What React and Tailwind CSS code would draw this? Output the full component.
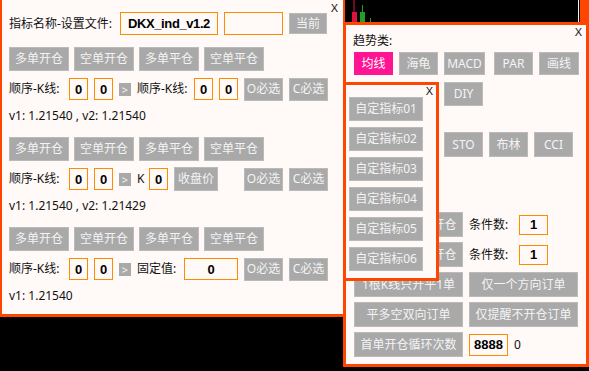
import React from 'react';

const cjk = "font-['Noto_Sans','Noto_Sans_CJK_SC',sans-serif]";

function Btn({ children, className = '' }) {
  return (
    <div className={`flex items-center justify-center shrink-0 bg-[#a9a9a9] border border-[#bababa] text-[#f4f4f4] text-[12px] leading-none whitespace-nowrap ${className}`}>
      {children}
    </div>
  );
}

function Box({ children, className = '' }) {
  return (
    <div className={`flex items-center justify-center shrink-0 border border-[#ff8c00] text-black font-bold font-['Liberation_Sans',sans-serif] text-[13px] leading-none ${className}`}>
      {children}
    </div>
  );
}

function Arrow() {
  return (
    <div className="flex items-center justify-center shrink-0 w-[12px] h-[13px] bg-[#a9a9a9] text-[#f4f4f4] text-[11px] leading-none">&gt;</div>
  );
}

function Close({ className = '' }) {
  return (
    <span className={`absolute text-[11px] leading-none text-[#111] font-['Liberation_Sans',sans-serif] ${className}`}>X</span>
  );
}

function OrderButtons() {
  return (
    <div className="flex gap-[5px]">
      <Btn className="w-[60px] h-[24px]">多单开仓</Btn>
      <Btn className="w-[60px] h-[24px]">空单开仓</Btn>
      <Btn className="w-[60px] h-[24px]">多单平仓</Btn>
      <Btn className="w-[60px] h-[24px]">空单平仓</Btn>
    </div>
  );
}

function SeqLabel() {
  return <span className="w-[54px] shrink-0 whitespace-nowrap">顺序-K线:</span>;
}

export default function App() {
  const customs = ['自定指标01', '自定指标02', '自定指标03', '自定指标04', '自定指标05', '自定指标06'];

  return (
    <div className={`relative w-[589px] h-[371px] bg-black overflow-hidden text-[12px] text-[#111] ${cjk}`}>
      {/* chart strip behind */}
      <svg className="absolute left-[345px] top-0" width="233" height="22">
        <line x1="9" y1="0" x2="9" y2="12" stroke="#dc143c" strokeWidth="1" />
        <rect x="7" y="12" width="5" height="10" fill="#dc143c" />
        <line x1="17.5" y1="5" x2="17.5" y2="12" stroke="#22a022" strokeWidth="1" />
        <rect x="15" y="12" width="5" height="10" fill="#22a022" />
        <line x1="25.5" y1="18" x2="25.5" y2="22" stroke="#22a022" strokeWidth="1" />
      </svg>
      <div className="absolute left-[578px] top-0 w-px h-[22px] bg-[#f0f0f0]" />
      <div className="absolute left-[580px] top-0 w-[9px] h-[22px] bg-[#ff4500]" />

      {/* left settings window */}
      <div className="absolute left-0 top-0 w-[345px] h-[317px] bg-[#fffaf8] border-l-2 border-r-2 border-b-[3px] border-[#ff4500] pl-[7px] pt-[12px]">
        <Close className="right-[5px] top-[3px]" />

        <div className="flex items-center gap-[6px] h-[23px]">
          <span className="w-[105px] shrink-0 whitespace-nowrap">指标名称-设置文件:</span>
          <Box className="w-[98px] h-[23px] text-[12px] tracking-[-0.4px]">DKX_ind_v1.2</Box>
          <Box className="w-[59px] h-[23px]" />
          <Btn className="w-[38px] h-[21px]">当前</Btn>
        </div>

        <div className="mt-[12px]"><OrderButtons /></div>
        <div className="mt-[6px] flex items-center gap-[6px] h-[24px]">
          <SeqLabel />
          <Box className="w-[19px] h-[22px]">0</Box>
          <Box className="w-[19px] h-[22px]">0</Box>
          <Arrow />
          <span className="w-[51px] shrink-0 whitespace-nowrap">顺序-K线:</span>
          <Box className="w-[19px] h-[22px]">0</Box>
          <Box className="w-[19px] h-[22px]">0</Box>
          <Btn className="w-[39px] h-[23px]">O必选</Btn>
          <Btn className="w-[39px] h-[23px]">C必选</Btn>
        </div>
        <div className="h-[30px] flex items-center">v1: 1.21540 , v2: 1.21540</div>

        <div className="mt-[6px]"><OrderButtons /></div>
        <div className="mt-[6px] flex items-center gap-[6px] h-[24px]">
          <SeqLabel />
          <Box className="w-[19px] h-[22px]">0</Box>
          <Box className="w-[19px] h-[22px]">0</Box>
          <Arrow />
          <span className="w-[6px] shrink-0">K</span>
          <Box className="w-[19px] h-[22px]">0</Box>
          <Btn className="w-[44px] h-[24px]">收盘价</Btn>
          <Btn className="ml-[20px] w-[39px] h-[23px]">O必选</Btn>
          <Btn className="w-[39px] h-[23px]">C必选</Btn>
        </div>
        <div className="h-[30px] flex items-center">v1: 1.21540 , v2: 1.21429</div>

        <div className="mt-[6px]"><OrderButtons /></div>
        <div className="mt-[6px] flex items-center gap-[6px] h-[24px]">
          <SeqLabel />
          <Box className="w-[19px] h-[22px]">0</Box>
          <Box className="w-[19px] h-[22px]">0</Box>
          <Arrow />
          <span className="w-[41px] shrink-0 whitespace-nowrap">固定值:</span>
          <Box className="w-[54px] h-[22px]">0</Box>
          <Btn className="w-[39px] h-[23px]">O必选</Btn>
          <Btn className="w-[39px] h-[23px]">C必选</Btn>
        </div>
        <div className="h-[30px] flex items-center">v1: 1.21540</div>
      </div>

      {/* right trend window */}
      <div className="absolute left-[343px] top-[22px] w-[246px] h-[345px] bg-[#fffaf8] border-[3px] border-[#ff4500] pl-[8px] pt-[6px]">
        <Close className="right-[4px] top-[2px]" />
        <div className="h-[20px] flex items-center -ml-px">趋势类:</div>

        <div className="mt-[1px] flex">
          <Btn className="w-[39px] h-[23px] !bg-[#ff1493] !border-[#ff1493] text-white">均线</Btn>
          <Btn className="ml-[6px] w-[39px] h-[23px]">海龟</Btn>
          <Btn className="ml-[6px] w-[41px] h-[23px]">MACD</Btn>
          <Btn className="ml-[9px] w-[39px] h-[23px]">PAR</Btn>
          <Btn className="ml-[6px] w-[40px] h-[23px]">画线</Btn>
        </div>
        <div className="mt-[7px] flex">
          <Btn className="ml-[90px] w-[39px] h-[24px]">DIY</Btn>
        </div>
        <div className="mt-[26px] flex">
          <Btn className="ml-[90px] w-[39px] h-[25px]">STO</Btn>
          <Btn className="ml-[6px] w-[39px] h-[25px]">布林</Btn>
          <Btn className="ml-[6px] w-[39px] h-[25px]">CCI</Btn>
        </div>

        <div className="mt-[55px] flex items-center">
          <Btn className="w-[109px] h-[25px]">多单条件满足开仓</Btn>
          <span className="ml-[6px] w-[44px] shrink-0 whitespace-nowrap">条件数:</span>
          <Box className="ml-[6px] w-[29px] h-[20px]">1</Box>
        </div>
        <div className="mt-[5px] flex items-center">
          <Btn className="w-[109px] h-[25px]">空单条件满足开仓</Btn>
          <span className="ml-[6px] w-[44px] shrink-0 whitespace-nowrap">条件数:</span>
          <Box className="ml-[6px] w-[29px] h-[20px]">1</Box>
        </div>
        <div className="mt-[5px] flex">
          <Btn className="w-[109px] h-[25px]">1根K线只开平1单</Btn>
          <Btn className="ml-[6px] w-[109px] h-[25px]">仅一个方向订单</Btn>
        </div>
        <div className="mt-[5px] flex">
          <Btn className="w-[109px] h-[25px]">平多空双向订单</Btn>
          <Btn className="ml-[6px] w-[109px] h-[25px]">仅提醒不开仓订单</Btn>
        </div>
        <div className="mt-[5px] flex items-center">
          <Btn className="w-[109px] h-[25px]">首单开仓循环次数</Btn>
          <Box className="ml-[6px] w-[39px] h-[22px] text-[12px]">8888</Box>
          <span className="ml-[6px]">0</span>
        </div>
      </div>

      {/* custom indicator popup */}
      <div className="absolute left-[343px] top-[82px] w-[96px] h-[199px] bg-[#fffaf8] border-[3px] border-[#ff4500] pl-[3px] pt-[12px] flex flex-col gap-[6px]">
        <Close className="right-[3px] top-[1px]" />
        {customs.map(name => (
          <Btn key={name} className="w-[74px] h-[24px]">{name}</Btn>
        ))}
      </div>
    </div>
  );
}
